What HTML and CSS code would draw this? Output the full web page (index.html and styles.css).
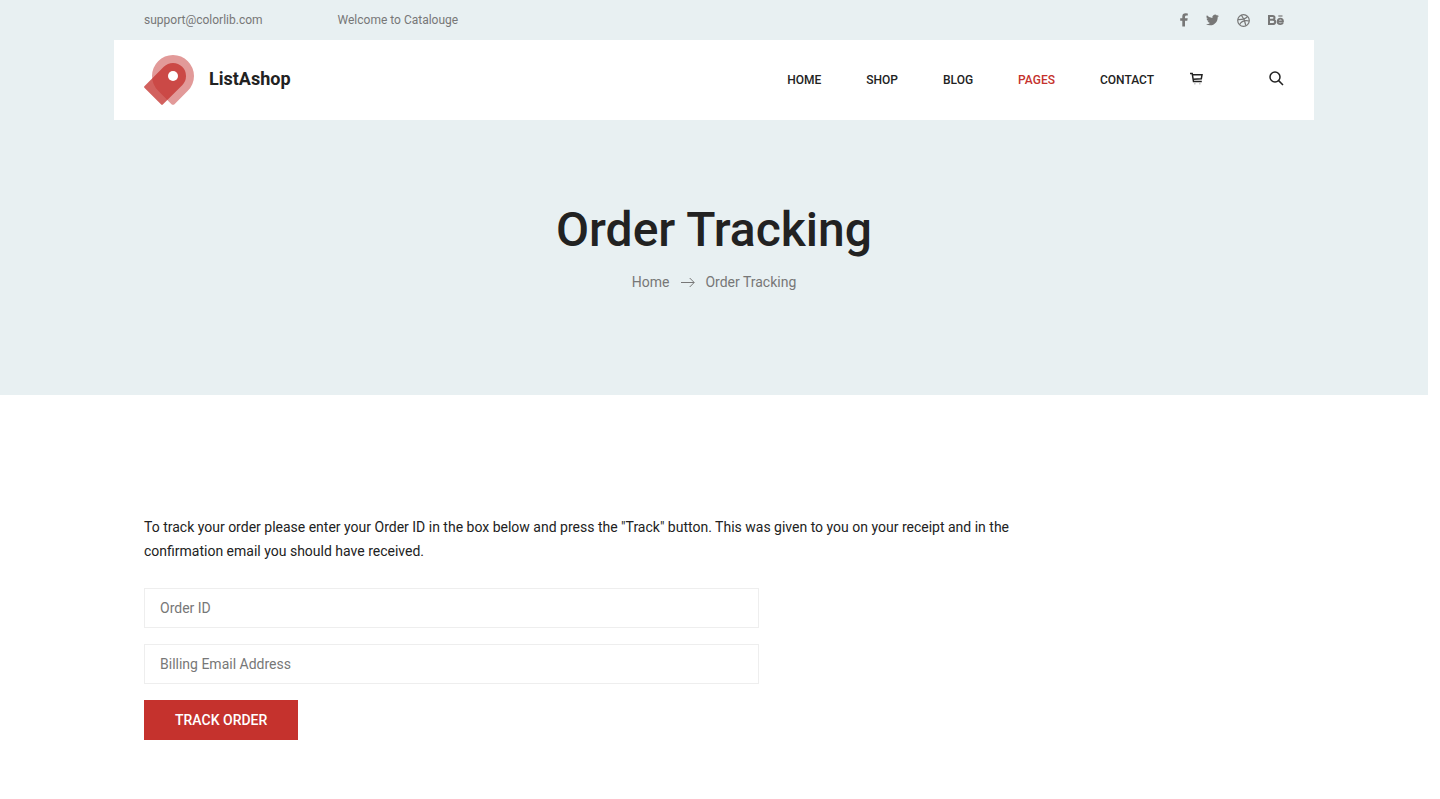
FILE: index.html
```html
<!DOCTYPE html>
<html lang="en">
<head>
<meta charset="utf-8">
<title>Order Tracking</title>
<link rel="stylesheet" href="styles.css">
</head>
<body>
<div class="hero">
  <div class="topbar">
    <div class="contact">
      <a class="mail" href="#">support@colorlib.com</a>
      <span>Welcome to Catalouge</span>
    </div>
    <div class="social">
      <a href="#" aria-label="Facebook"><svg width="8" height="14" viewBox="0 0 8 14"><path fill="currentColor" d="M7.800.4v2.100H6.500Q5 2.500 5 3.700V5.200H7.700L7.300 7.700H5V13.600H2.300V7.700H.2V5.200H2.300V3.400Q2.300.3 5.700.3Z"/></svg></a>
      <a href="#" aria-label="Twitter"><svg width="13" height="12" viewBox="0 0 24 20"><path fill="currentColor" d="M24 2.400a10 10 0 0 1-2.800.8A5 5 0 0 0 23.300.5a10 10 0 0 1-3.100 1.200A4.900 4.900 0 0 0 11.800 6.200 14 14 0 0 1 1.700 1a4.900 4.900 0 0 0 1.500 6.600A5 5 0 0 1 1 7v.1a4.900 4.900 0 0 0 4 4.800 5 5 0 0 1-2.300.1 4.900 4.900 0 0 0 4.600 3.400A10 10 0 0 1 0 17.500a14 14 0 0 0 7.500 2.200c9.100 0 14-7.500 14-14V5A10 10 0 0 0 24 2.400z"/></svg></a>
      <a href="#" aria-label="Dribbble"><svg width="13" height="13" viewBox="0 0 24 24" fill="none" stroke="currentColor" stroke-width="2.200"><circle cx="12" cy="12" r="10.700"/><path d="M8 2.200C12 7 15 14 16.300 21.500M1.500 10.500C9 10.700 16 9.500 19.700 4.500M4.600 19.700C8 13.500 14.500 11 22.600 13"/></svg></a>
      <a href="#" aria-label="Behance"><svg width="16" height="10" viewBox="0 0 16 10"><g fill="none" stroke="currentColor" stroke-width="2"><path d="M1 1H4.600Q6.500 1 6.500 2.800T4.600 4.800H1M4.600 4.800Q7.200 4.800 7.200 6.900T4.600 9H1V0"/><path stroke-width="1.800" d="M9.600 6.500H15Q14.900 3.600 12.400 3.600T9.600 6.400 12.400 9.100Q14.300 9.100 14.900 7.900"/><path stroke-width="1.200" d="M10.300 1H14.500"/></g></svg></a>
    </div>
  </div>
  <header class="header">
    <a class="brand" href="#">
      <svg width="50" height="50" viewBox="0 0 50 50"><path fill="#e29a99" d="M14.150 35.850A21 21 0 1 1 43.850 35.850L30.500 49.200Q29 50.500 27.500 49.200Z"/><path fill="#c42f2b" fill-opacity=".76" d="M19.800 11.800A13 13 0 0 1 38.200 30.200L18.800 49.600Q18 50.400 17.200 49.600L.4 32.800Q-.4 32 .4 31.200Z"/><circle cx="29" cy="21" r="5" fill="#fff"/></svg>
      <span>ListAshop</span>
    </a>
    <nav class="nav">
      <a href="#">HOME</a>
      <a href="#">SHOP</a>
      <a href="#">BLOG</a>
      <a class="active" href="#">PAGES</a>
      <a href="#">CONTACT</a>
    </nav>
    <a class="icon cart" href="#" aria-label="Cart"><svg width="13" height="14" viewBox="0 0 13 14"><g fill="none" stroke="currentColor" stroke-width="1.500"><path d="M0 1.500H2.200L3.500 9.500H11.800M2.400 2.800H12L11.300 6.800L3.200 7.300"/></g><path fill="#ccc" d="M4 11h1.600v1.600H4zM9 11h1.600v1.600H9z"/></svg></a>
    <button class="icon" type="button" aria-label="Search"><svg width="15" height="15" viewBox="0 0 15 15" fill="none" stroke="currentColor" stroke-width="1.500"><circle cx="6" cy="6" r="5"/><path d="M9.600 9.600L14 14"/></svg></button>
  </header>
  <div class="banner">
    <h1>Order Tracking</h1>
    <div class="crumbs">
      <a href="#">Home</a>
      <svg width="14" height="10" viewBox="0 0 14 10" fill="none" stroke="currentColor"><path d="M1 5.500H14M9.700 1L14.200 5.500L9.700 10"/></svg>
      <a href="#">Order Tracking</a>
    </div>
  </div>
</div>
<main class="tracking">
  <p>To track your order please enter your Order ID in the box below and press the "Track" button. This was given to you on your receipt and in the confirmation email you should have received.</p>
  <form class="form">
    <input type="text" placeholder="Order ID" aria-label="Order ID">
    <input type="email" placeholder="Billing Email Address" aria-label="Billing Email Address">
    <button type="submit">TRACK ORDER</button>
  </form>
</main>
</body>
</html>
```
FILE: styles.css
```css
* {
  box-sizing: border-box;
}

body {
  margin: 0;
  padding-right: 12px;
  background: #fff;
  color: #222;
  font: 14px/24px Roboto, sans-serif;
}

a {
  color: inherit;
  text-decoration: none;
}

svg {
  display: block;
  overflow: visible;
}

.hero {
  background: #e8f0f2;
}

.topbar,
.header,
.tracking {
  max-width: 1200px;
  margin: 0 auto;
  padding: 0 30px;
}

.topbar {
  display: flex;
  align-items: center;
  justify-content: space-between;
  height: 40px;
  color: #777;
  font-size: 12px;
}

.contact {
  display: flex;
  gap: 75px;
}

.social {
  display: flex;
  align-items: center;
  gap: 18px;
}

.header {
  display: flex;
  align-items: center;
  height: 80px;
  background: #fff;
}

.brand {
  display: flex;
  align-items: center;
  gap: 15px;
  margin-right: auto;
  font-size: 18px;
  font-weight: 700;
}

.brand span {
  padding-bottom: 2px;
}

.nav {
  display: flex;
  gap: 45px;
  margin-right: 36px;
  font-size: 12px;
  font-weight: 500;
}

.nav .active {
  color: #c5322d;
}

.icon {
  padding: 0 0 3px;
  border: 0;
  background: none;
  color: #222;
}

.cart {
  margin-right: 66px;
}

.banner {
  padding: 80px 0 101px;
  text-align: center;
}

h1 {
  margin: 0 0 10px;
  font-size: 48px;
  font-weight: 500;
  line-height: 60px;
}

.crumbs {
  display: flex;
  align-items: center;
  justify-content: center;
  gap: 11px;
  color: #777;
}

.tracking {
  padding-top: 120px;
  padding-bottom: 60px;
}

.tracking p {
  max-width: 870px;
  margin: 0 0 25px;
}

.form {
  display: flex;
  flex-direction: column;
  align-items: flex-start;
  gap: 16px;
  max-width: 615px;
}

.form input {
  width: 100%;
  height: 40px;
  padding: 0 15px;
  border: 1px solid #eee;
  background: #fff;
  color: #222;
  font: inherit;
}

.form input::placeholder {
  color: #777;
}

.form button {
  height: 40px;
  padding: 0 31px;
  border: 0;
  background: #c5322d;
  color: #fff;
  font: inherit;
  font-weight: 500;
}
```
